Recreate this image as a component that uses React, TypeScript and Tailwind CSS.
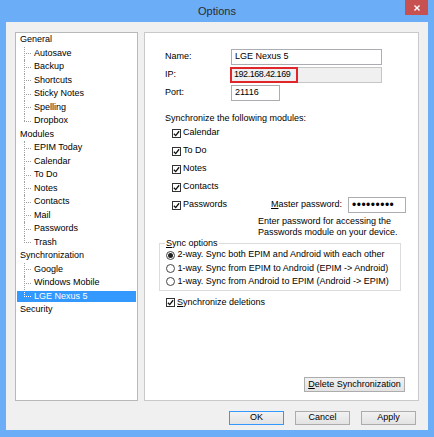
import React from "react";

// ── Data ───────────────────────────────────────────────────────────────────────

const tree: { label: string; children: string[] }[] = [
  { label: "General", children: ["Autosave", "Backup", "Shortcuts", "Sticky Notes", "Spelling", "Dropbox"] },
  { label: "Modules", children: ["EPIM Today", "Calendar", "To Do", "Notes", "Contacts", "Mail", "Passwords", "Trash"] },
  { label: "Synchronization", children: ["Google", "Windows Mobile", "LGE Nexus 5"] },
  { label: "Security", children: [] },
];

const SELECTED = "LGE Nexus 5";

// ── Controls ───────────────────────────────────────────────────────────────────

function Check({ checked = true }: { checked?: boolean }) {
  return (
    <span className="w-[9px] h-[9px] border border-[#333] bg-white flex items-center justify-center shrink-0">
      {checked && (
        <svg viewBox="0 0 8 8" className="w-[7px] h-[7px]">
          <path d="M1 4.3 L3.1 6.4 L7 1.4" fill="none" stroke="#111" strokeWidth="1.5" />
        </svg>
      )}
    </span>
  );
}

function Radio({ on = false }: { on?: boolean }) {
  return (
    <span className="w-[9px] h-[9px] rounded-full border border-[#444] bg-white flex items-center justify-center shrink-0">
      {on && <span className="w-[5px] h-[5px] rounded-full bg-[#222]" />}
    </span>
  );
}

function Button({ children, primary = false, className = "" }: { children: React.ReactNode; primary?: boolean; className?: string }) {
  return (
    <div
      className={`flex items-center justify-center border bg-gradient-to-b from-[#f2f2f2] to-[#e3e3e3] ${
        primary ? "border-[#3399ff]" : "border-[#acacac]"
      } ${className}`}
    >
      {children}
    </div>
  );
}

// ── Tree ───────────────────────────────────────────────────────────────────────

function TreeRow({ label, child, last }: { label: string; child: boolean; last?: boolean }) {
  const sel = label === SELECTED;
  return (
    <div className="relative h-[13.5px] flex items-center">
      <div
        className={`h-[11px] w-full ml-[1px] mr-[1px] flex items-center whitespace-nowrap ${
          child ? "pl-[17px]" : "pl-[3px]"
        } ${sel ? "bg-[#3399ff] text-white" : ""}`}
      >
        {label}
      </div>
      {child && (
        <>
          <span
            className={`absolute left-[8px] top-0 border-l border-dotted ${
              sel ? "border-white" : "border-[#a0a0a0]"
            } ${last ? "h-[7px]" : "h-full"}`}
          />
          <span
            className={`absolute left-[8px] top-[6.5px] w-[7px] border-t border-dotted ${
              sel ? "border-white" : "border-[#a0a0a0]"
            }`}
          />
        </>
      )}
    </div>
  );
}

// ── Page ───────────────────────────────────────────────────────────────────────

export default function App() {
  return (
    <div className="w-[434px] h-[437px] bg-[#6badf6] flex flex-col text-[9px] text-black [font-family:'Liberation_Sans',Arial,sans-serif]">
      {/* Title bar */}
      <div className="h-[22px] relative flex items-center justify-center shrink-0">
        <span className="text-[11px] text-[#2b2b2b] mt-[1px]">Options</span>
        <div className="absolute right-[6px] top-0 w-[23px] h-[15px] bg-[#c75050] flex items-center justify-center">
          <svg viewBox="0 0 6 6" className="w-[6px] h-[6px]">
            <path d="M0.5 0.5 L5.5 5.5 M5.5 0.5 L0.5 5.5" stroke="#fff" strokeWidth="1.4" />
          </svg>
        </div>
      </div>

      {/* Client area */}
      <div className="mx-[6px] h-[408px] bg-[#f0f0f0] flex flex-col px-[9px] pt-[10px]">
        <div className="flex gap-[6px] h-[369px]">
          {/* Tree */}
          <div className="w-[123px] shrink-0 bg-white border border-[#b9b9b9] overflow-hidden">
            {tree.map((g) => (
              <React.Fragment key={g.label}>
                <TreeRow label={g.label} child={false} />
                {g.children.map((c, i) => (
                  <TreeRow key={c} label={c} child last={i === g.children.length - 1} />
                ))}
              </React.Fragment>
            ))}
          </div>

          {/* Settings page */}
          <div className="flex-1 bg-white border border-[#c9c9c9] flex flex-col pl-[14px] pt-[16px]">
            <div className="flex items-center h-[16px]">
              <span className="w-[72px] pl-[6px]">Name:</span>
              <div className="w-[151px] h-[16px] border border-[#abadb3] bg-white flex items-center pl-[3px]">LGE Nexus 5</div>
            </div>
            <div className="flex items-center h-[16px] mt-[2px]">
              <span className="w-[72px] pl-[6px]">IP:</span>
              <div className="relative w-[151px] h-[16px] border border-[#c6c6c6] bg-[#f0f0f0] flex items-center pl-[2px] tracking-[-0.45px]">
                192.168.42.169
                <span className="absolute left-[-2px] top-[-1px] w-[68px] h-[16px] border-2 border-[#e0262b]" />
              </div>
            </div>
            <div className="flex items-center h-[16px] mt-[2px]">
              <span className="w-[72px] pl-[6px]">Port:</span>
              <div className="w-[49px] h-[16px] border border-[#abadb3] bg-white flex items-center pl-[3px]">21116</div>
            </div>

            <div className="mt-[11px] h-[12px] leading-[12px] ml-[6px]">Synchronize the following modules:</div>

            {["Calendar", "To Do", "Notes", "Contacts"].map((m) => (
              <div key={m} className="h-[18px] flex items-center ml-[13px] gap-[2px]">
                <Check />
                <span>{m}</span>
              </div>
            ))}
            <div className="h-[18px] flex items-center justify-between pr-[12px]">
              <div className="flex items-center ml-[13px] gap-[2px]">
                <Check />
                <span>Passwords</span>
              </div>
              <div className="flex items-center">
                <span>
                  <span className="underline">M</span>aster password:
                </span>
                <div className="ml-[6px] w-[58px] h-[16px] border border-[#abadb3] bg-white flex items-center pl-[3px] text-[12px] tracking-[0.5px] leading-none">
                  •••••••••
                </div>
              </div>
            </div>
            <div className="ml-[99px] mt-[1.5px] leading-[11px]">
              <div>Enter password for accessing the</div>
              <div>Passwords module on your device.</div>
            </div>

            <fieldset className="w-[242px] border border-[#dcdcdc] pb-[2px]">
              <legend className="ml-[5px] px-[1px] leading-[11px]">
                <span className="underline">S</span>ync options
              </legend>
              {[
                { t: "2-way. Sync both EPIM and Android with each other", on: true },
                { t: "1-way. Sync from EPIM to Android (EPIM -> Android)", on: false },
                { t: "1-way. Sync from Android to EPIM (Android -> EPIM)", on: false },
              ].map((r) => (
                <div key={r.t} className="h-[13.33px] flex items-center pl-[6px] gap-[2.5px] whitespace-nowrap">
                  <Radio on={r.on} />
                  <span>{r.t}</span>
                </div>
              ))}
            </fieldset>

            <div className="mt-[2px] h-[18px] flex items-center ml-[7px] gap-[2px]">
              <Check />
              <span>
                <span className="underline">S</span>ynchronize deletions
              </span>
            </div>

            <Button className="mt-auto mb-[8px] self-end mr-[13px] w-[101px] h-[15px]">
              <span>
                <span className="underline">D</span>elete Synchronization
              </span>
            </Button>
          </div>
        </div>

        {/* Dialog buttons */}
        <div className="flex justify-end gap-[11px] mt-[10px] pr-[3px]">
          <Button primary className="w-[55px] h-[14px]">OK</Button>
          <Button className="w-[55px] h-[14px]">Cancel</Button>
          <Button className="w-[55px] h-[14px]">Apply</Button>
        </div>
      </div>
    </div>
  );
}
